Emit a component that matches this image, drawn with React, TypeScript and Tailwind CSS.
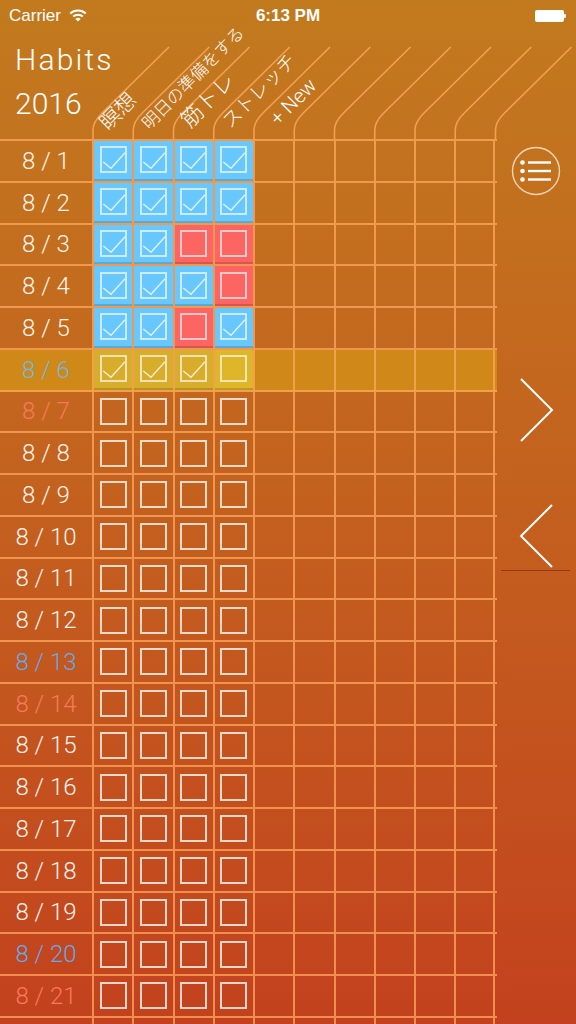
import React from "react"

type Mark = "b" | "r" | "y" | "Y" | "e"

const LINE = "border-[#ffa85f]/75"

const labels = [
  { text: "瞑想", cls: "text-[21px] leading-[26px] left-[19px] bottom-[5px]" },
  { text: "明日の準備をする", cls: "text-[17px] leading-[22px] left-[20px] bottom-[6px]" },
  { text: "筋トレ", cls: "text-[22px] leading-[26px] left-[19px] bottom-[8px]" },
  { text: "ストレッチ", cls: "text-[19px] leading-[24px] left-[20px] bottom-[7px]" },
  { text: "+ New", cls: "text-[20px] leading-[22px] left-[28px] bottom-[10px] font-['Roboto']" },
]

const marks: Record<number, Mark[]> = {
  1: ["b", "b", "b", "b"],
  2: ["b", "b", "b", "b"],
  3: ["b", "b", "r", "r"],
  4: ["b", "b", "b", "r"],
  5: ["b", "b", "r", "b"],
  6: ["y", "y", "y", "Y"],
}

const TODAY = 6
const days = Array.from({ length: 24 }, (_, i) => i + 1)
const cols = Array.from({ length: 10 }, (_, i) => i)

function dateColor(d: number) {
  if (d % 7 === 6) return d === TODAY ? "text-[#74b6dc]" : "text-[#62aaea]"
  if (d % 7 === 0) return "text-[#f8785a]"
  return "text-[#fdf4ec]"
}

function Check() {
  return (
    <svg viewBox="0 0 23 23" className="h-full w-full overflow-visible">
      <polyline points="1.3,14 9,20.3 23,4.7" fill="none" stroke="rgba(255,255,255,0.8)" strokeWidth="1.3" />
    </svg>
  )
}

function Cell({ mark }: { mark?: Mark }) {
  if (!mark) return null
  if (mark === "e") {
    return <div className="h-[27px] w-[27px] border-2 border-[#fff0e6]/85" />
  }
  const fill = {
    b: "bg-[#68c8fd]",
    r: "bg-[#fd6563]",
    y: "bg-[#d8ad2b]",
    Y: "bg-[#dfb62a]",
  }[mark]
  const checked = mark === "b" || mark === "y"
  return (
    <div className={`flex h-full w-full items-center justify-center border-b-2 border-black/15 ${fill}`}>
      <div className="h-[27px] w-[27px] border-2 border-white/65">{checked && <Check />}</div>
    </div>
  )
}

function Wifi() {
  return (
    <svg width="18" height="13" viewBox="0 0 18 13">
      <path d="M1.2 4.6 A11.5 11.5 0 0 1 16.8 4.6" fill="none" stroke="white" strokeWidth="2" />
      <path d="M4.2 7.6 A7 7 0 0 1 13.8 7.6" fill="none" stroke="white" strokeWidth="2" />
      <path d="M9 12.6 L6.4 10 A3.7 3.7 0 0 1 11.6 10 Z" fill="white" />
    </svg>
  )
}

function MenuIcon() {
  return (
    <svg width="50" height="50" viewBox="0 0 50 50">
      <circle cx="25" cy="25" r="23.5" fill="none" stroke="rgba(255,240,225,0.8)" strokeWidth="1.4" />
      {[16.5, 25, 33.5].map((y) => (
        <g key={y}>
          <circle cx="11.5" cy={y} r="2.3" fill="white" />
          <line x1="17" y1={y} x2="40" y2={y} stroke="white" strokeWidth="2.4" />
        </g>
      ))}
    </svg>
  )
}

function Chevron({ dir }: { dir: "left" | "right" }) {
  const pts = dir === "right" ? "3,2 34,33 3,64" : "34,2 3,33 34,64"
  return (
    <svg width="37" height="66" viewBox="0 0 37 66">
      <polyline points={pts} fill="none" stroke="white" strokeWidth="2" />
    </svg>
  )
}

export default function App() {
  const lineXs = Array.from({ length: 11 }, (_, i) => 93 + 40.25 * i)

  return (
    <div className="h-[1024px] w-[576px] overflow-hidden bg-linear-to-b from-[#c27a1e] to-[#c3411e] font-['Roboto'] text-white">
      {/* status bar */}
      <div className="grid h-[31px] grid-cols-3 items-center px-[9px] font-['Liberation_Sans'] text-[17px]">
        <div className="flex items-center gap-[8px]">
          <span>Carrier</span>
          <Wifi />
        </div>
        <span className="text-center font-semibold">6:13 PM</span>
        <div className="flex items-center justify-end pr-[1px]">
          <div className="h-[12px] w-[29px] rounded-[2px] bg-white" />
          <div className="h-[4px] w-[2px] rounded-r-[1px] bg-white/90" />
        </div>
      </div>

      {/* header */}
      <div className="relative flex h-[108px]">
        <svg className="absolute inset-0" width="576" height="108" viewBox="0 0 576 108">
          {lineXs.map((x) => (
            <path
              key={x}
              d={`M${x} 108 L${x} 99 Q${x} 91 ${x + 9} 82 L${x + 76} 16`}
              fill="none"
              stroke="rgba(255,170,95,0.8)"
              strokeWidth="1.6"
            />
          ))}
        </svg>
        <div className="relative w-[92px] whitespace-nowrap pl-[15px] pt-[7px] text-[30px] font-light leading-[44px]">
          <span className="tracking-[2.2px]">Habits</span>
          <br />
          2016
        </div>
        {labels.map((l) => (
          <div key={l.text} className="relative w-[40.25px]">
            <span
              className={`absolute origin-bottom-left -rotate-45 whitespace-nowrap font-['Noto_Sans_CJK_JP',sans-serif] font-light ${l.cls}`}
            >
              {l.text}
            </span>
          </div>
        ))}
      </div>

      {/* body */}
      <div className="flex">
        <div className={`w-[496.5px] shrink-0 border-t-2 ${LINE}`}>
          {days.map((d) => (
            <div key={d} className={`flex h-[41.75px] border-b-2 ${LINE} ${d === TODAY ? "bg-[#d08918]" : ""}`}>
              <div className={`flex w-[92px] items-center justify-center text-[24px] font-light ${dateColor(d)}`}>
                8 / {d}
              </div>
              {cols.map((c) => (
                <div
                  key={c}
                  className={`flex w-[40.25px] items-center justify-center border-l-2 ${LINE} ${c === 9 ? "border-r-2" : ""}`}
                >
                  <Cell mark={c < 4 ? (marks[d]?.[c] ?? "e") : undefined} />
                </div>
              ))}
            </div>
          ))}
        </div>

        <div className="flex flex-1 flex-col items-center pt-[7px]">
          <MenuIcon />
          <div className="mt-[181px]">
            <Chevron dir="right" />
          </div>
          <div className="mt-[60px]">
            <Chevron dir="left" />
          </div>
          <div className="ml-[4px] mt-[1px] h-px w-[69px] self-start bg-[#7a2c0c]/70" />
        </div>
      </div>
    </div>
  )
}
